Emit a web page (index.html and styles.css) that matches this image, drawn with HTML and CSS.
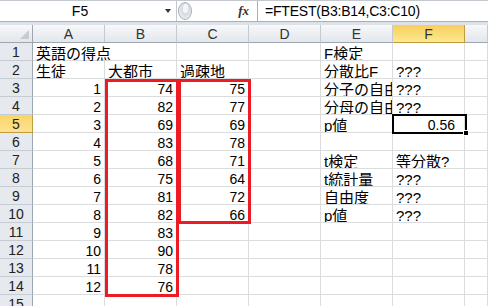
FILE: index.html
```html
<!DOCTYPE html>
<html lang="ja">
<head>
    <meta charset="utf-8">
    <title>F検定</title>
    <link rel="stylesheet" href="styles.css">
</head>
<body>
    <div class="formula-bar">
        <div class="name-box">
            <span class="name">F5</span>
            <span class="arrow"></span>
        </div>
        <div class="fx-area">
            <span class="grip"></span>
            <span class="fx">fx</span>
        </div>
        <div class="formula">=FTEST(B3:B14,C3:C10)</div>
    </div>
    <div class="bar-gap"></div>

    <div class="sheet">
        <div class="row head">
            <div class="corner"><span class="tri"></span></div>
            <div class="ch">A</div><div class="ch">B</div><div class="ch">C</div>
            <div class="ch">D</div><div class="ch">E</div><div class="ch on">F</div><div class="ch"></div>
        </div>
        <div class="row">
            <div class="rh">1</div>
            <div class="c spill">英語の得点</div><div class="c"></div><div class="c"></div>
            <div class="c"></div><div class="c">F検定</div><div class="c"></div><div class="c"></div>
        </div>
        <div class="row">
            <div class="rh">2</div>
            <div class="c">生徒</div><div class="c">大都市</div><div class="c">過疎地</div>
            <div class="c"></div><div class="c">分散比F</div><div class="c">???</div><div class="c"></div>
        </div>
        <div class="row">
            <div class="rh">3</div>
            <div class="c num">1</div><div class="c num">74</div><div class="c num">75</div>
            <div class="c"></div><div class="c">分子の自由度</div><div class="c">???</div><div class="c"></div>
        </div>
        <div class="row">
            <div class="rh">4</div>
            <div class="c num">2</div><div class="c num">82</div><div class="c num">77</div>
            <div class="c"></div><div class="c">分母の自由度</div><div class="c">???</div><div class="c"></div>
        </div>
        <div class="row">
            <div class="rh on">5</div>
            <div class="c num">3</div><div class="c num">69</div><div class="c num">69</div>
            <div class="c"></div><div class="c">p値</div><div class="c num pad">0.56</div><div class="c"></div>
        </div>
        <div class="row">
            <div class="rh">6</div>
            <div class="c num">4</div><div class="c num">83</div><div class="c num">78</div>
            <div class="c"></div><div class="c"></div><div class="c"></div><div class="c"></div>
        </div>
        <div class="row">
            <div class="rh">7</div>
            <div class="c num">5</div><div class="c num">68</div><div class="c num">71</div>
            <div class="c"></div><div class="c">t検定</div><div class="c">等分散?</div><div class="c"></div>
        </div>
        <div class="row">
            <div class="rh">8</div>
            <div class="c num">6</div><div class="c num">75</div><div class="c num">64</div>
            <div class="c"></div><div class="c">t統計量</div><div class="c">???</div><div class="c"></div>
        </div>
        <div class="row">
            <div class="rh">9</div>
            <div class="c num">7</div><div class="c num">81</div><div class="c num">72</div>
            <div class="c"></div><div class="c">自由度</div><div class="c">???</div><div class="c"></div>
        </div>
        <div class="row">
            <div class="rh">10</div>
            <div class="c num">8</div><div class="c num">82</div><div class="c num">66</div>
            <div class="c"></div><div class="c">p値</div><div class="c">???</div><div class="c"></div>
        </div>
        <div class="row">
            <div class="rh">11</div>
            <div class="c num">9</div><div class="c num">83</div><div class="c"></div>
            <div class="c"></div><div class="c"></div><div class="c"></div><div class="c"></div>
        </div>
        <div class="row">
            <div class="rh">12</div>
            <div class="c num">10</div><div class="c num">90</div><div class="c"></div>
            <div class="c"></div><div class="c"></div><div class="c"></div><div class="c"></div>
        </div>
        <div class="row">
            <div class="rh">13</div>
            <div class="c num">11</div><div class="c num">78</div><div class="c"></div>
            <div class="c"></div><div class="c"></div><div class="c"></div><div class="c"></div>
        </div>
        <div class="row">
            <div class="rh">14</div>
            <div class="c num">12</div><div class="c num">76</div><div class="c"></div>
            <div class="c"></div><div class="c"></div><div class="c"></div><div class="c"></div>
        </div>
        <div class="row">
            <div class="rh">15</div>
            <div class="c"></div><div class="c"></div><div class="c"></div>
            <div class="c"></div><div class="c"></div><div class="c"></div><div class="c"></div>
        </div>

        <!-- 範囲の赤枠とアクティブセル -->
        <div class="range range-b"></div>
        <div class="range range-c"></div>
        <div class="active"><span class="handle"></span></div>
    </div>
</body>
</html>
```

FILE: styles.css
```css
* {
    box-sizing: border-box;
}

body {
    margin: 0;
    width: 488px;
    height: 306px;
    overflow: hidden;
    background: #fff;
    color: #000;
    font-family: "Liberation Sans", "Noto Sans CJK JP", sans-serif;
    font-size: 14px;
}

/* formula bar */
.formula-bar {
    display: flex;
    height: 22px;
    border-top: 1px solid #c3c8ce;
    border-bottom: 1px solid #a9b0b8;
    background: #fff;
}

.name-box {
    width: 177px;
    display: flex;
    align-items: center;
    border-right: 1px solid #c3c8ce;
}

.name {
    width: 160px;
    text-align: center;
    line-height: 20px;
}

.arrow {
    margin-left: 5px;
    border-left: 3px solid transparent;
    border-right: 3px solid transparent;
    border-top: 4px solid #333;
}

.fx-area {
    width: 81px;
    display: flex;
    align-items: center;
    border-right: 1px solid #a9b0b8;
}

.grip {
    width: 14px;
    height: 18px;
    margin-left: 1px;
    border: 1px solid #aab1ba;
    border-radius: 50%;
    background: radial-gradient(ellipse at 55% 35%, #f4f5f7 0, #f4f5f7 30%, #d6d9dd 31%, #e8eaed 70%);
}

.fx {
    margin-left: auto;
    margin-right: 8px;
    font-family: "Liberation Serif", serif;
    font-style: italic;
    font-weight: bold;
    font-size: 13px;
    color: #333;
}

.formula {
    flex: 1;
    padding-left: 7px;
    line-height: 20px;
    letter-spacing: -0.2px;
}

.bar-gap {
    height: 3px;
    background: #dde2e8;
}

/* sheet grid */
.sheet {
    position: relative;
}

.row {
    display: grid;
    grid-template-columns: 33px repeat(6, 72px) 1fr;
    height: 18px;
}

.c {
    height: 18px;
    padding: 4px 3px 0 3px;
    line-height: 13px;
    border-right: 1px solid #dadcdd;
    border-bottom: 1px solid #dadcdd;
    white-space: nowrap;
    overflow: hidden;
    font-size: 15px;
}

.c.num {
    text-align: right;
    font-size: 14px;
}

.c.pad {
    padding-right: 9px;
}

.c.spill {
    overflow: visible;
    border-right: none;
}

.rh {
    height: 18px;
    text-align: center;
    line-height: 19px;
    color: #222;
    background: #e6e9ed;
    border-right: 1px solid #9ea6b0;
    border-bottom: 1px solid #c6ccd3;
}

.rh.on {
    background: linear-gradient(#f9d46a, #fde38f);
    border-bottom-color: #c29b3c;
    border-right-color: #c29b3c;
}

.head .corner,
.head .ch {
    height: 18px;
    background: linear-gradient(#f7f8fa, #e3e7eb);
    border-right: 1px solid #c4cad1;
    border-bottom: 1px solid #9ea6b0;
    text-align: center;
    line-height: 18px;
    color: #333;
}

.head .corner {
    position: relative;
    border-right-color: #9ea6b0;
}

.tri {
    position: absolute;
    right: 3px;
    bottom: 3px;
    border-left: 9px solid transparent;
    border-bottom: 9px solid #c7ccd2;
}

.head .ch.on {
    background: linear-gradient(#f8cd5c, #fde98f);
    border-right-color: #c29b3c;
    border-bottom-color: #c29b3c;
}

/* overlays */
.range {
    position: absolute;
    top: 54px;
    border: 3px solid #ed1c24;
}

.range-b {
    left: 105px;
    width: 74px;
    height: 218px;
}

.range-c {
    left: 178px;
    width: 73px;
    height: 145px;
}

.active {
    position: absolute;
    left: 392px;
    top: 89px;
    width: 75px;
    height: 20px;
    border: 2px solid #000;
}

.handle {
    position: absolute;
    right: -4px;
    bottom: -4px;
    width: 6px;
    height: 6px;
    background: #000;
    border: 1px solid #fff;
}
```
